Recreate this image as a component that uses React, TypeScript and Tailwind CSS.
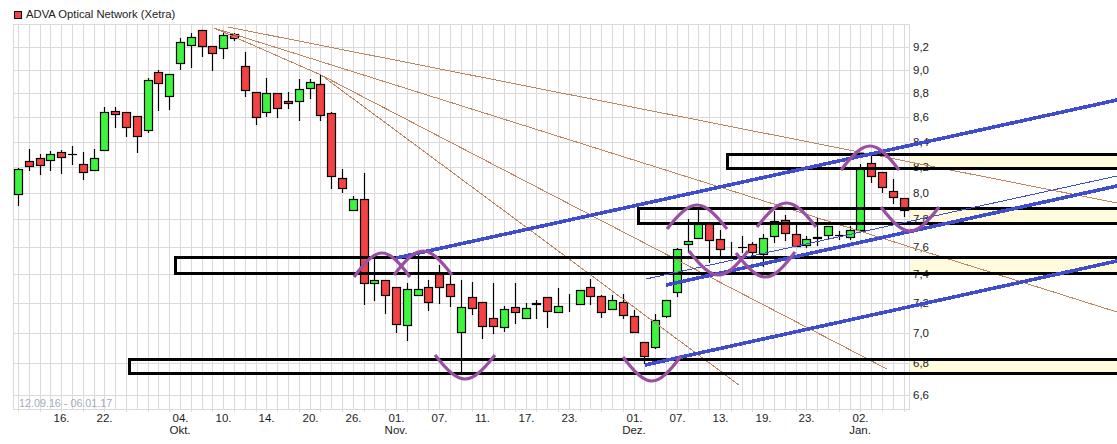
const FONT = "font-['Liberation_Sans',Arial,sans-serif]";

const RED = "#f44141";
const GREEN = "#3cf53c";

// body top, body bottom, wick top, wick bottom, colour
const candles: [number, number, number, number, string][] = [
  [169, 195, 168, 206, GREEN],
  [161, 167, 149, 171, RED],
  [158, 166, 154, 175, RED],
  [154, 161, 151, 171, GREEN],
  [152, 158, 150, 174, RED],
  [154, 154, 146, 165, "k"],
  [164, 173, 152, 180, RED],
  [158, 171, 149, 171, GREEN],
  [112, 151, 107, 151, GREEN],
  [111, 115, 107, 128, RED],
  [112, 128, 112, 137, RED],
  [116, 137, 116, 153, RED],
  [80, 131, 78, 133, GREEN],
  [72, 84, 70, 111, RED],
  [74, 97, 74, 110, GREEN],
  [42, 64, 38, 70, GREEN],
  [37, 46, 33, 68, GREEN],
  [30, 47, 30, 57, RED],
  [46, 54, 46, 71, RED],
  [35, 49, 33, 59, GREEN],
  [34, 39, 33, 41, RED],
  [66, 91, 52, 97, RED],
  [92, 118, 92, 125, RED],
  [93, 113, 78, 117, GREEN],
  [93, 109, 93, 118, RED],
  [101, 104, 92, 109, RED],
  [89, 102, 79, 121, GREEN],
  [82, 89, 79, 99, GREEN],
  [84, 116, 75, 121, RED],
  [113, 177, 112, 189, RED],
  [178, 189, 169, 193, RED],
  [199, 211, 196, 211, GREEN],
  [199, 284, 173, 305, RED],
  [280, 284, 255, 301, GREEN],
  [280, 296, 280, 314, RED],
  [287, 325, 287, 333, RED],
  [289, 326, 283, 341, GREEN],
  [289, 296, 255, 296, GREEN],
  [287, 303, 280, 311, RED],
  [274, 288, 265, 304, RED],
  [284, 297, 273, 307, RED],
  [307, 333, 280, 372, GREEN],
  [297, 309, 282, 315, RED],
  [302, 327, 302, 339, RED],
  [318, 327, 283, 334, RED],
  [309, 328, 306, 332, GREEN],
  [307, 313, 283, 324, RED],
  [308, 319, 303, 319, GREEN],
  [303, 305, 300, 319, RED],
  [297, 312, 297, 328, RED],
  [306, 313, 288, 313, GREEN],
  [305, 306, 294, 312, "k"],
  [290, 305, 290, 305, GREEN],
  [287, 297, 279, 305, RED],
  [296, 313, 295, 318, RED],
  [300, 310, 295, 310, GREEN],
  [302, 316, 294, 319, RED],
  [316, 333, 310, 333, RED],
  [342, 357, 342, 364, RED],
  [320, 348, 314, 349, GREEN],
  [300, 317, 300, 318, GREEN],
  [249, 293, 248, 297, GREEN],
  [241, 245, 219, 253, GREEN],
  [224, 239, 209, 239, GREEN],
  [224, 241, 223, 263, RED],
  [239, 250, 230, 257, RED],
  [250, 251, 242, 257, "k"],
  [247, 247, 236, 253, "k"],
  [244, 253, 242, 257, RED],
  [238, 255, 234, 267, GREEN],
  [221, 237, 211, 243, GREEN],
  [220, 234, 215, 241, RED],
  [234, 247, 223, 247, RED],
  [239, 246, 236, 248, GREEN],
  [237, 239, 218, 246, RED],
  [226, 236, 226, 240, GREEN],
  [235, 235, 231, 240, "k"],
  [230, 238, 226, 240, GREEN],
  [169, 231, 164, 231, GREEN],
  [163, 177, 152, 183, RED],
  [172, 188, 172, 193, RED],
  [191, 198, 179, 204, RED],
  [198, 211, 198, 217, RED],
];

const candleX = (i: number) => Math.round(18 + i * 10.8);

const rows = [24, 47, 70, 93, 117, 142, 167, 193, 219, 247, 274, 303, 333, 363, 395, 409];

const prices: [string, number][] = [
  ["9,2", 47],
  ["9,0", 70],
  ["8,8", 93],
  ["8,6", 117],
  ["8,4", 142],
  ["8,2", 167],
  ["8,0", 193],
  ["7,8", 219],
  ["7,6", 247],
  ["7,4", 274],
  ["7,2", 303],
  ["7,0", 333],
  ["6,8", 363],
  ["6,6", 395],
];

const days: [string, number][] = [
  ["16.", 4],
  ["22.", 8],
  ["04.", 15],
  ["10.", 19],
  ["14.", 23],
  ["20.", 27],
  ["26.", 31],
  ["01.", 35],
  ["07.", 39],
  ["11.", 43],
  ["17.", 47],
  ["23.", 51],
  ["01.", 57],
  ["07.", 61],
  ["13.", 65],
  ["19.", 69],
  ["23.", 73],
  ["02.", 78],
];

const months: [string, number][] = [
  ["Okt.", 15],
  ["Nov.", 35],
  ["Dez.", 57],
  ["Jan.", 78],
];

// zones: left, top line, bottom line
const zones = [
  [727, 154, 168],
  [638, 208, 223],
  [175, 257, 273],
  [129, 359, 373],
];

const brownLines = [
  [228, 27, 1117, 203],
  [214, 28, 1117, 312],
  [321, 75, 887, 369],
  [214, 28, 321, 75],
  [321, 75, 739, 385],
];

const blueLines = [
  [396, 258, 1117, 100],
  [666, 285, 1117, 186],
  [645, 365, 1117, 261],
];

// left end, right end, y of left end, y of right end, y of the bend
const arcs = [
  [354, 410, 277, 277, 253],
  [394, 452, 275, 275, 251],
  [435, 495, 355, 355, 379],
  [623, 681, 357, 356, 381],
  [667, 727, 229, 229, 205],
  [689, 748, 251, 251, 275],
  [736, 795, 253, 252, 277],
  [757, 816, 227, 227, 203],
  [841, 899, 170, 170, 146],
  [881, 939, 207, 207, 231],
];

const arcPath = ([x0, x1, y0, y1, bend]: number[]) => {
  const w = x1 - x0;
  const c = bend + (bend - (y0 + y1) / 2) / 3;
  return `M${x0} ${y0}C${x0 + w * 0.42} ${c} ${x0 + w * 0.58} ${c} ${x1} ${y1}`;
};

const Candle = ({ index }: { index: number }) => {
  const [top, bottom, wickTop, wickBottom, color] = candles[index];
  const x = candleX(index);
  return (
    <g stroke="#000" strokeWidth={1.2}>
      <line x1={x + 0.5} x2={x + 0.5} y1={wickTop} y2={wickBottom} />
      {top === bottom ? (
        <line x1={x - 4} x2={x + 5} y1={top + 0.5} y2={top + 0.5} />
      ) : (
        <rect
          x={x - 3.5}
          y={top + 0.5}
          width={8}
          height={bottom - top - 1}
          fill={color === "k" ? "#000" : color}
        />
      )}
    </g>
  );
};

const Chart = () => (
  <svg
    className={`block ${FONT}`}
    width={1117}
    height={420}
    viewBox="0 24 1117 420"
  >
    {zones.map(([, top, bottom]) => (
      <rect
        key={top}
        x={909}
        y={top}
        width={208}
        height={bottom - top}
        fill="#fffbdc"
      />
    ))}

    <g stroke="#dadada">
      {rows.map((y) => (
        <line key={y} x1={13} x2={910} y1={y + 0.5} y2={y + 0.5} />
      ))}
      <line x1={13.5} x2={13.5} y1={24} y2={410} />
      <line x1={909.5} x2={909.5} y1={24} y2={410} />
      {candles.map((_, i) => (
        <line
          key={i}
          x1={candleX(i) + 0.5}
          x2={candleX(i) + 0.5}
          y1={24}
          y2={i % 2 ? 410 : 412}
        />
      ))}
    </g>

    <g fontSize={11.5} fill="#1c1c1c">
      {prices.map(([label, y]) => (
        <text key={label} x={913} y={y + 4}>
          {label}
        </text>
      ))}
      {days.map(([label, i]) => (
        <text key={i} x={candleX(i) + 0.5} y={422} textAnchor="middle">
          {label}
        </text>
      ))}
      {months.map(([label, i]) => (
        <text key={label} x={candleX(i)} y={434} textAnchor="middle">
          {label}
        </text>
      ))}
    </g>
    <text x={19} y={407} fontSize={10.75} fill="#a3abba">
      12.09.16 - 06.01.17
    </text>

    {candles.map((_, i) => (
      <Candle key={i} index={i} />
    ))}

    <g stroke="#bd8560" fill="none" shapeRendering="crispEdges">
      {brownLines.map(([x1, y1, x2, y2]) => (
        <line key={`${x1}-${x2}`} x1={x1} y1={y1} x2={x2} y2={y2} />
      ))}
    </g>

    <g stroke="#000" strokeWidth={3} fill="none">
      {zones.map(([left, top, bottom]) => (
        <rect
          key={top}
          x={left + 0.5}
          y={top + 0.5}
          width={1140 - left}
          height={bottom - top}
        />
      ))}
    </g>

    <g shapeRendering="crispEdges">
      <line x1={646} y1={279} x2={1117} y2={176} stroke="#3f4ccb" />
      <g stroke="#3f4ccb" strokeWidth={3.6}>
        {blueLines.map(([x1, y1, x2, y2]) => (
          <line key={x1} x1={x1} y1={y1} x2={x2} y2={y2} />
        ))}
      </g>
    </g>

    <g stroke="#9b4fa4" strokeWidth={3.2} fill="none">
      {arcs.map((arc) => (
        <path key={arc[0]} d={arcPath(arc)} />
      ))}
    </g>
  </svg>
);

export default function App() {
  return (
    <div className={`w-[1117px] h-[444px] bg-white overflow-hidden ${FONT}`}>
      <div className="h-6 flex items-center gap-[4px] pl-[14px] pt-[5px]">
        <span className="w-2 h-2 bg-[#f44141] border border-black" />
        <span className="text-[11.25px] leading-none text-[#222]">
          ADVA Optical Network (Xetra)
        </span>
      </div>
      <Chart />
    </div>
  );
}
